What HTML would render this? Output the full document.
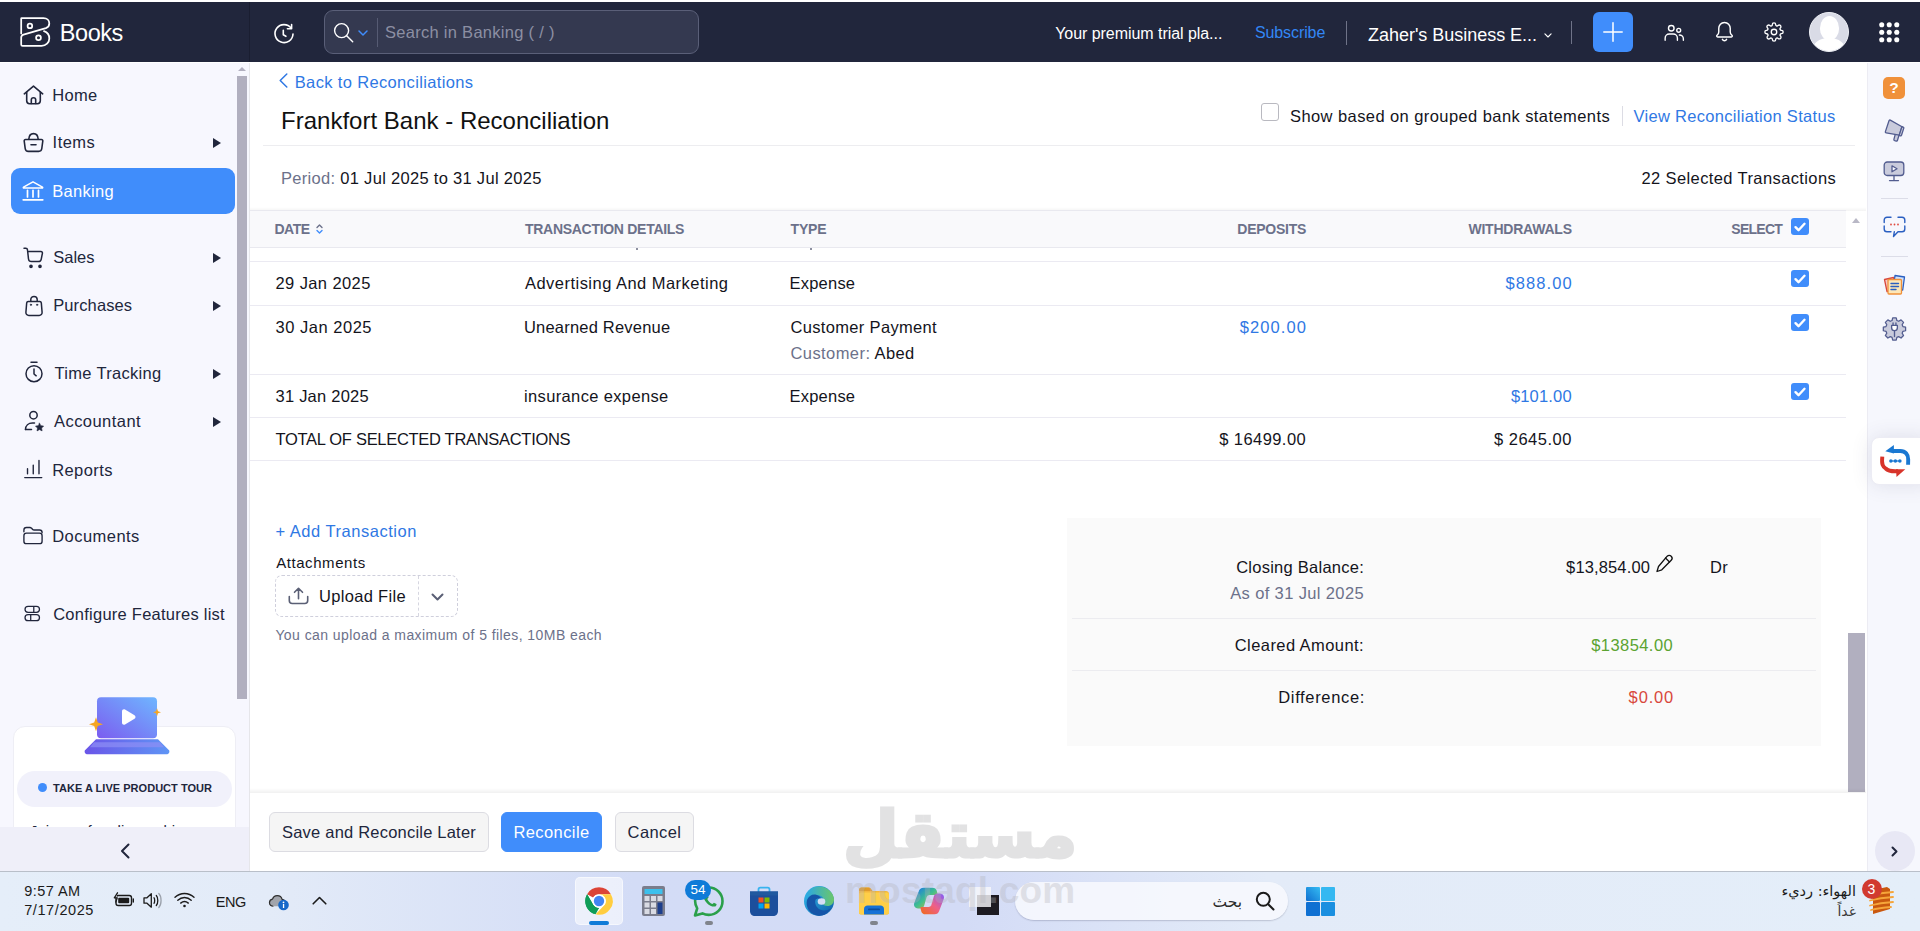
<!DOCTYPE html>
<html lang="en">
<head>
<meta charset="utf-8">
<title>Frankfort Bank - Reconciliation | Books</title>
<style>
*{box-sizing:border-box;margin:0;padding:0}
html,body{width:1920px;height:931px;overflow:hidden;background:#fff}
body{font-family:"Liberation Sans",sans-serif;color:#14141c;position:relative;font-size:16px}
.abs{position:absolute}
.t{position:absolute;white-space:nowrap;line-height:20px;height:20px}
svg{position:absolute;overflow:visible}
/* header */
#hdr{left:0;top:2px;width:1920px;height:60px;background:#21263c}
#hdr .logo-sep{left:249px;top:0;width:1px;height:60px;background:#1a1e31}
#search{left:324px;top:8px;width:375px;height:44px;border:1px solid #5a5f78;border-radius:9px;background:#343950}
#search .sep{left:52px;top:7px;width:1px;height:29px;background:#565b73}
/* left sidebar */
#side{left:0;top:63px;width:249px;height:808px;background:#f7f7fe}
#sideborder{left:249px;top:63px;width:1px;height:808px;background:#e6e6ea}
.nav{position:absolute;left:53px;font-size:16.5px;color:#21263c;white-space:nowrap;line-height:20px;letter-spacing:.35px}
.arrow{position:absolute;left:213px;width:0;height:0;border-left:8px solid #21263c;border-top:5px solid transparent;border-bottom:5px solid transparent}
#active{left:11px;top:168px;width:224px;height:46px;border-radius:9px;background:#408dfb}
/* main */
#main{left:250px;top:63px;width:1617px;height:808px;background:#fff}
/* right bar */
#rbar{left:1867px;top:63px;width:53px;height:808px;background:#f6f7fd;border-left:1px solid #ececf3}
/* taskbar */
#task{left:0;top:871px;width:1920px;height:60px;background:linear-gradient(90deg,#e5eef9 0%,#e3ebf8 14%,#d3dcf6 33%,#d3dbf6 50%,#e3ebf8 66%,#e4eef9 100%);border-top:1px solid #b9bfc9}

.lnk,.td.lnk{color:#2f78e4}
.th{position:absolute;white-space:nowrap;font-size:14px;font-weight:700;color:#6c718a;line-height:16px;top:221px;letter-spacing:0}
.td{position:absolute;white-space:nowrap;font-size:16.5px;color:#14141c;line-height:20px;letter-spacing:.3px}
.r{text-align:right}
.hl{position:absolute;left:250px;width:1596px;height:1px;background:#ebeaf2}
.cb{position:absolute;left:1791px;width:18px;height:17px;border-radius:3px;background:#408dfb}
.cb svg{left:3px;top:3.5px}
.btn{position:absolute;top:812px;height:40px;border:1px solid #dcdce2;border-radius:6px;background:#f5f5f5;font-size:16.5px;line-height:38px;text-align:center;white-space:nowrap;color:#21263c;letter-spacing:.3px}
</style>
</head>
<body>
<!-- ============ HEADER ============ -->
<div id="hdr" class="abs">
  <div class="abs logo-sep"></div>
  <!-- logo -->
  <svg style="left:20px;top:15px" width="30" height="30" viewBox="0 0 30 30" fill="none" stroke="#fff" stroke-width="1.750" stroke-linejoin="round" stroke-linecap="round">
    <path d="M1.200 16.400V1.600Q1.200 1.100 1.700 1.100H23.500C27 1.100 29.300 3.300 29.300 6.400C29.300 8.600 28 10.300 25.900 11.100L3.500 17.700C2 18.200 1.200 19.100 1.200 20.600V27.500Q1.200 28.900 2.600 28.900H21.500C26 28.900 29.300 25.600 29.300 21.400C29.300 18.100 27.300 15.300 24 14.200"/>
    <circle cx="9.900" cy="8.900" r="2.300"/>
    <circle cx="18.500" cy="20.800" r="2.400"/>
  </svg>
  <div class="t" id="books" style="left:59.80px;top:18.00px;font-size:23.5px;line-height:26px;height:26px;color:#fff;letter-spacing:-0.45px">Books</div>
  <!-- recent/refresh -->
  <svg style="left:273px;top:21px" width="22" height="22" viewBox="0 0 22 22" fill="none" stroke="#fff" stroke-width="1.600" stroke-linecap="round" stroke-linejoin="round">
    <path d="M18.200 5.200A9 9 0 1 0 20 11"/>
    <path d="M18.600 1.500v4.200h-4.200"/>
    <path d="M10.300 7.200v4.600l2.600 1.500"/>
  </svg>
  <div id="search" class="abs"><div class="abs sep"></div>
    <svg style="left:8px;top:11px" width="22" height="22" viewBox="0 0 22 22" fill="none" stroke="#fff" stroke-width="1.400" stroke-linecap="round"><circle cx="8.600" cy="8.600" r="7"/><path d="M13.700 13.700l6 6"/></svg>
    <svg style="left:33px;top:19px" width="10" height="6" viewBox="0 0 10 6" fill="none" stroke="#408dfb" stroke-width="1.500" stroke-linecap="round" stroke-linejoin="round"><path d="M1 1l4 4 4-4"/></svg>
    <div class="t" id="ph" style="left:60.00px;top:11.00px;font-size:16.5px;color:#8c8fa3;letter-spacing:0.28px">Search in Banking ( / )</div>
  </div>
  <div class="t" id="trial" style="left:1055.20px;top:22.00px;font-size:16px;color:#fff;letter-spacing:-0.05px">Your premium trial pla...</div>
  <div class="t" id="subs" style="left:1254.90px;top:21.00px;font-size:16px;color:#3386f5;letter-spacing:-0.09px">Subscribe</div>
  <div class="abs" style="left:1346px;top:19px;width:1px;height:24px;background:#6f7388"></div>
  <div class="t" id="org" style="left:1368.10px;top:23.00px;font-size:18px;color:#fff;letter-spacing:-0.03px">Zaher's Business E...</div>
  <svg style="left:1543.500px;top:30.500px" width="8" height="5.300" viewBox="0 0 9 6" fill="none" stroke="#fff" stroke-width="1.300" stroke-linecap="round" stroke-linejoin="round"><path d="M1 1l3.500 3.500L8 1"/></svg>
  <div class="abs" style="left:1571px;top:19px;width:1px;height:23px;background:#6f7388"></div>
  <!-- plus -->
  <div class="abs" style="left:1593px;top:10px;width:40px;height:40px;border-radius:6px;background:#408dfb"></div>
  <svg style="left:1603px;top:20px" width="20" height="20" viewBox="0 0 20 20" fill="none" stroke="#fff" stroke-width="1.500" stroke-linecap="round"><path d="M10 .800v18.400M.800 10h18.400"/></svg>
  <!-- users -->
  <svg style="left:1664px;top:21.500px" width="20.500" height="18.600" viewBox="0 0 22 20" fill="none" stroke="#fff" stroke-width="1.500" stroke-linecap="round" stroke-linejoin="round">
    <circle cx="7.800" cy="4.600" r="3"/><path d="M1.200 17.500v-2.300c0-2.500 2-4.400 4.500-4.400h4.200c2.500 0 4.500 1.900 4.500 4.400v2.300"/>
    <circle cx="15.800" cy="6.800" r="2.100"/><path d="M16.500 11.800c2.400 0 4.300 1.700 4.300 4v1.700"/>
  </svg>
  <!-- bell -->
  <svg style="left:1713.500px;top:19px" width="21" height="21" viewBox="0 0 22 22" fill="none" stroke="#fff" stroke-width="1.500" stroke-linecap="round" stroke-linejoin="round">
    <path d="M11 1.500c-3.600 0-6 2.800-6 6.200v3.800c0 1.400-.7 2.600-1.800 3.500-.7.600-.4 1.800.6 1.800h14.400c1 0 1.300-1.200.6-1.800-1.100-.9-1.800-2.100-1.800-3.500V7.700c0-3.400-2.400-6.200-6-6.200z"/>
    <path d="M8.800 19.200c.5 1 1.300 1.500 2.200 1.500s1.700-.5 2.200-1.500"/>
  </svg>
  <!-- gear -->
  <svg style="left:1764px;top:20px" width="20" height="20" viewBox="0 0 24 24" fill="none" stroke="#fff" stroke-width="1.600" stroke-linecap="round" stroke-linejoin="round">
    <circle cx="12" cy="12" r="3.300"/>
    <path d="M19.400 15a1.650 1.650 0 0 0 .33 1.820l.06.060a2 2 0 1 1-2.830 2.830l-.06-.06a1.650 1.650 0 0 0-1.820-.33 1.650 1.650 0 0 0-1 1.510V21a2 2 0 0 1-4 0v-.09A1.650 1.650 0 0 0 9 19.400a1.650 1.650 0 0 0-1.820.33l-.06.06a2 2 0 1 1-2.830-2.830l.06-.06a1.650 1.650 0 0 0 .33-1.820 1.650 1.650 0 0 0-1.510-1H3a2 2 0 0 1 0-4h.09A1.650 1.650 0 0 0 4.600 9a1.650 1.650 0 0 0-.33-1.820l-.06-.06a2 2 0 1 1 2.830-2.830l.06.06a1.650 1.650 0 0 0 1.820.33H9a1.650 1.650 0 0 0 1-1.510V3a2 2 0 0 1 4 0v.09a1.650 1.650 0 0 0 1 1.510 1.650 1.650 0 0 0 1.820-.33l.06-.06a2 2 0 1 1 2.830 2.830l-.06.06a1.650 1.650 0 0 0-.33 1.820V9a1.650 1.650 0 0 0 1.510 1H21a2 2 0 0 1 0 4h-.09a1.650 1.650 0 0 0-1.510 1z"/>
  </svg>
  <!-- avatar -->
  <div class="abs" style="left:1809px;top:10px;width:40px;height:40px;border-radius:50%;background:#d9dbe6;overflow:hidden;border:1px solid #eef0f6">
    <div class="abs" style="left:9.500px;top:3px;width:19px;height:24px;border-radius:50% 50% 46% 46%;background:#fff"></div>
    <div class="abs" style="left:2px;top:25px;width:34px;height:26px;border-radius:48% 48% 0 0;background:#fff"></div>
  </div>
  <!-- grid -->
  <svg style="left:1879px;top:19.500px" width="20.500" height="20.500" viewBox="0 0 21 21" fill="#fff"><circle cx="2.800" cy="2.800" r="2.600"/><circle cx="10.500" cy="2.800" r="2.600"/><circle cx="18.200" cy="2.800" r="2.600"/><circle cx="2.800" cy="10.500" r="2.600"/><circle cx="10.500" cy="10.500" r="2.600"/><circle cx="18.200" cy="10.500" r="2.600"/><circle cx="2.800" cy="18.200" r="2.600"/><circle cx="10.500" cy="18.200" r="2.600"/><circle cx="18.200" cy="18.200" r="2.600"/></svg>
</div>
<!-- ============ LEFT SIDEBAR ============ -->
<div id="side" class="abs">
  <!-- scrollbar -->
  <div class="abs" style="left:237px;top:13px;width:10px;height:623px;background:#b1afbf"></div>
  <div class="abs" style="left:238px;top:4px;width:0;height:0;border-left:4px solid transparent;border-right:4px solid transparent;border-bottom:4px solid #b1afbf"></div>
  <div id="active" class="abs" style="top:105px"></div>
  <!-- Home -->
  <svg style="left:23px;top:22px" width="21" height="20" viewBox="0 0 21 20" fill="none" stroke="#21263c" stroke-width="1.600" stroke-linecap="round" stroke-linejoin="round">
    <path d="M1.300 8.800L10.500 1.200l9.200 7.600"/><path d="M3.700 7.200v8.600c0 1.700 1.200 2.900 2.900 2.900h7.800c1.700 0 2.900-1.200 2.900-2.900V7.200"/><path d="M8.300 18.500v-3.700c0-1.200 1-2.100 2.200-2.100s2.200.9 2.200 2.100v3.700"/>
  </svg>
  <div class="nav" id="n1" style="top:22.00px;letter-spacing:0.36px;left:52.20px">Home</div>
  <!-- Items -->
  <svg style="left:23px;top:69px" width="21" height="21" viewBox="0 0 21 21" fill="none" stroke="#21263c" stroke-width="1.600" stroke-linecap="round" stroke-linejoin="round">
    <path d="M2.500 7.500h16c.8 0 1.400.7 1.300 1.500l-1 7.500c-.2 1.700-1.500 2.900-3.200 2.900H5.400c-1.700 0-3-1.200-3.200-2.900l-1-7.500c-.1-.8.500-1.500 1.300-1.500z"/><path d="M5.800 7.300C6 4 7.900 1.600 10.500 1.600S15 4 15.200 7.300"/><path d="M8 12.800h5"/>
  </svg>
  <div class="nav" id="n2" style="top:69.00px;letter-spacing:0.45px;left:52.60px">Items</div><div class="arrow" style="top:75px"></div>
  <!-- Banking -->
  <svg style="left:22px;top:117px" width="22" height="21" viewBox="0 0 22 21" fill="none" stroke="#fff" stroke-width="1.500" stroke-linecap="round" stroke-linejoin="round">
    <path d="M1.500 7.200L11 1.800l9.500 5.400c.4.300.2.900-.3.900H1.800c-.5 0-.7-.6-.3-.9z"/><path d="M5.500 10.300v6.700M11 10.300v6.700M16.500 10.300v6.700M1.200 19.800h19.600" stroke-width="1.700"/>
  </svg>
  <div class="nav" id="n3" style="top:118.00px;color:#fff;letter-spacing:0.31px;left:52.20px">Banking</div>
  <!-- Sales -->
  <svg style="left:23px;top:184px" width="22" height="22" viewBox="0 0 22 22" fill="none" stroke="#21263c" stroke-width="1.500" stroke-linecap="round" stroke-linejoin="round">
    <path d="M1 1.300h1.800c.9 0 1.600.6 1.700 1.500l1 9.200c.2 1.500 1.400 2.600 2.900 2.600h6.900c1.400 0 2.600-1 2.900-2.300l1.200-6c.2-.9-.5-1.800-1.500-1.800H6"/><circle cx="8" cy="19.300" r="1.100" fill="#21263c"/><circle cx="17" cy="19.300" r="1.100" fill="#21263c"/>
  </svg>
  <div class="nav" id="n4" style="top:184.00px;letter-spacing:0.02px;left:53.20px">Sales</div><div class="arrow" style="top:190px"></div>
  <!-- Purchases -->
  <svg style="left:25px;top:232px" width="18" height="22" viewBox="0 0 18 22" fill="none" stroke="#21263c" stroke-width="1.500" stroke-linecap="round" stroke-linejoin="round">
    <path d="M3.200 6.500h11.600c.8 0 1.400.6 1.500 1.300l.8 9.600c.1 1.700-1.200 3.100-2.900 3.100H3.800c-1.700 0-3-1.400-2.900-3.100l.8-9.600c.1-.7.700-1.300 1.500-1.300z"/><path d="M5.800 6.300V4.600c0-1.800 1.400-3.200 3.200-3.200s3.200 1.400 3.200 3.200v1.700"/><circle cx="5.900" cy="9.800" r=".7" fill="#21263c" stroke-width=".6"/><circle cx="12.100" cy="9.800" r=".7" fill="#21263c" stroke-width=".6"/>
  </svg>
  <div class="nav" id="n5" style="top:232.00px;letter-spacing:0.12px;left:53.20px">Purchases</div><div class="arrow" style="top:238px"></div>
  <!-- Time tracking -->
  <svg style="left:24px;top:298px" width="20" height="22" viewBox="0 0 20 22" fill="none" stroke="#21263c" stroke-width="1.500" stroke-linecap="round" stroke-linejoin="round">
    <circle cx="10" cy="12.700" r="8"/><path d="M10 8v5l2.200 1.800M7 1.200h6"/>
  </svg>
  <div class="nav" id="n6" style="top:300.00px;letter-spacing:0.29px;left:54.60px">Time Tracking</div><div class="arrow" style="top:306px"></div>
  <!-- Accountant -->
  <svg style="left:24px;top:347px" width="22" height="22" viewBox="0 0 22 22" fill="none" stroke="#21263c" stroke-width="1.500" stroke-linecap="round" stroke-linejoin="round">
    <circle cx="9.500" cy="5.200" r="3.700"/><path d="M1.500 19.500c0-4 3-6.500 7-6.500h2"/><path d="M1.500 19.500h6"/>
    <path fill="#21263c" stroke-width=".6" d="M15.500 13.200l1.300 2.500 2.800.4-2 2 .5 2.800-2.600-1.300-2.500 1.300.5-2.800-2-2 2.800-.4z"/>
  </svg>
  <div class="nav" id="n7" style="top:348.00px;letter-spacing:0.45px;left:54.00px">Accountant</div><div class="arrow" style="top:354px"></div>
  <!-- Reports -->
  <svg style="left:24px;top:395px" width="18.500" height="22" viewBox="0 0 20 22" fill="none" stroke="#21263c" stroke-width="1.500" stroke-linecap="round">
    <path d="M3.800 10.800v5.400M10 6.800v9.400M16.200 1.800v14.400M.800 20.300h18.400"/>
  </svg>
  <div class="nav" id="n8" style="top:397.00px;letter-spacing:0.41px;left:52.20px">Reports</div>
  <!-- Documents -->
  <svg style="left:23px;top:462.500px" width="20" height="19" viewBox="0 0 22 20" fill="none" stroke="#21263c" stroke-width="1.500" stroke-linecap="round" stroke-linejoin="round">
    <path d="M1 6V4c0-1.600 1.200-2.800 2.800-2.800h3.700c.8 0 1.500.3 2 .9l.9 1c.5.600 1.200.9 2 .9h5.800c1.600 0 2.800 1.200 2.800 2.800V7"/><rect x="1" y="7.400" width="20" height="11.600" rx="2.800"/>
  </svg>
  <div class="nav" id="n9" style="top:463.00px;letter-spacing:0.46px;left:52.20px">Documents</div>
  <!-- Configure -->
  <svg style="left:24px;top:542px" width="16.500" height="17" viewBox="0 0 19 20" fill="none" stroke="#21263c" stroke-width="1.500" stroke-linecap="round" stroke-linejoin="round">
    <rect x="1" y="1.500" width="17" height="7.200" rx="3.600"/><rect x="1" y="11.300" width="17" height="7.200" rx="3.600"/><path d="M11.300 1.800v6.600M7.700 11.600v6.600"/>
  </svg>
  <div class="nav" id="n10" style="top:541.00px;letter-spacing:0.25px;left:53.20px">Configure Features list</div>
  <!-- product tour card -->
  <div class="abs" style="left:13px;top:663px;width:223px;height:120px;border-radius:12px;background:#fff;border:1px solid #eeeef5"></div>
  <div class="abs" style="left:17px;top:708px;width:215px;height:36px;border-radius:18px;background:#f1f1fb"></div>
  <div class="abs" style="left:38px;top:720px;width:9px;height:9px;border-radius:50%;background:#408dfb"></div>
  <div class="t" id="tour" style="left:53.00px;top:715px;font-size:11px;font-weight:700;color:#21263c;letter-spacing:0.03px">TAKE A LIVE PRODUCT TOUR</div>
  <!-- laptop illustration -->
  <svg style="left:83px;top:632.500px" width="88" height="60.500" viewBox="0 0 88 60">
    <defs><linearGradient id="lg1" x1="0" y1="1" x2="1" y2="0"><stop offset="0" stop-color="#7b5cf0"/><stop offset="1" stop-color="#6fb6ff"/></linearGradient>
    <linearGradient id="lg2" x1="0" y1="0" x2="1" y2="0"><stop offset="0" stop-color="#6a55e8"/><stop offset="1" stop-color="#5f95f5"/></linearGradient></defs>
    <rect x="14" y="1" width="60" height="41" rx="4" fill="url(#lg1)"/>
    <path d="M13 43h62l11 11c1 1.500 0 4-2.500 4H4.500C2 58 1 55.500 2 54z" fill="url(#lg2)"/>
    <path d="M11 46h66l4 5H7z" fill="#8f8ff5" opacity=".7"/>
        <path d="M39 15c0-1.600 1.600-2.500 3-1.700l9.500 5.800c1.300.8 1.300 2.600 0 3.400L42 28.300c-1.400.8-3-.1-3-1.700z" fill="#fff"/>
    <path d="M13 21l1.800 5.200L20 28l-5.200 1.800L13 35l-1.800-5.200L6 28l5.200-1.800z" fill="#f5a623"/>
    <path d="M74 12l1 3 3 1-3 1-1 3-1-3-3-1 3-1z" fill="#f5a623"/>
  </svg>
  <!-- cut-off text under pill -->
  <div class="abs" style="left:30px;top:761px;width:190px;height:3px;overflow:hidden;font-size:15px;line-height:14px;color:#21263c;white-space:nowrap">Join our free live webinar</div>
  <!-- collapse bar -->
  <div class="abs" style="left:0;top:764px;width:249px;height:44px;background:#efeff9"></div>
  <svg style="left:120px;top:780px" width="10" height="16" viewBox="0 0 10 16" fill="none" stroke="#21263c" stroke-width="2" stroke-linecap="round" stroke-linejoin="round"><path d="M8.500 1.500L2 8l6.500 6.500"/></svg>
</div>
<div id="sideborder" class="abs"></div>
<!-- ============ MAIN ============ -->
<div id="main" class="abs"></div>
<!-- back link -->
<svg style="left:279px;top:73px" width="9" height="15" viewBox="0 0 9 15" fill="none" stroke="#2f78e4" stroke-width="1.500" stroke-linecap="round" stroke-linejoin="round"><path d="M7.800 1L1.200 7.500 7.800 14"/></svg>
<div class="t lnk" id="back" style="left:294.75px;top:72px;font-size:16.5px;letter-spacing:0.35px">Back to Reconciliations</div>
<div class="t" id="title" style="left:281.00px;top:106px;font-size:24px;line-height:30px;height:30px;color:#111;letter-spacing:0.01px">Frankfort Bank - Reconciliation</div>
<div class="abs" style="left:1261px;top:103px;width:18px;height:18px;border:1px solid #b9b9c0;border-radius:3px;background:#fff"></div>
<div class="t" id="showb" style="left:1290.00px;top:106px;font-size:16.5px;letter-spacing:0.42px">Show based on grouped bank statements</div>
<div class="abs" style="left:1622px;top:106px;width:1px;height:20px;background:#dcdce4"></div>
<div class="t lnk" id="viewr" style="left:1633.50px;top:106px;font-size:16.5px;letter-spacing:0.30px">View Reconciliation Status</div>
<div class="abs" style="left:263px;top:145px;width:1592px;height:1px;background:#ededf0"></div>
<div class="t" id="period" style="left:281.00px;top:168px;font-size:16.5px;letter-spacing:0.30px"><span style="color:#6c718a">Period:</span> 01 Jul 2025 to 31 Jul 2025</div>
<div class="t" id="sel22" style="left:1641.50px;top:168px;font-size:16.5px;letter-spacing:0.39px">22 Selected Transactions</div>
<!-- table header -->
<div class="abs" style="left:250px;top:207px;width:1616px;height:4px;background:linear-gradient(180deg,rgba(0,0,0,0),rgba(0,0,0,.045))"></div>
<div class="abs" style="left:250px;top:210px;width:1596px;height:38px;background:#f9f9fb;border-top:1px solid #e9e9ef;border-bottom:1px solid #e9e9ef"></div>
<div class="th" id="h1" style="left:274.50px;letter-spacing:-0.50px">DATE</div>
<svg style="left:316px;top:224px" width="7" height="10" viewBox="0 0 7 10" fill="none" stroke-width="1.400" stroke-linecap="round" stroke-linejoin="round"><path d="M1 3.500L3.500 1 6 3.500" stroke="#6c718a"/><path d="M1 6.500L3.500 9 6 6.500" stroke="#408dfb"/></svg>
<div class="th" id="h2" style="left:525.00px;letter-spacing:-0.29px">TRANSACTION DETAILS</div>
<div class="th" id="h3" style="left:790.50px;letter-spacing:-0.17px">TYPE</div>
<div class="th r" id="h4" style="right:613.90px;letter-spacing:-0.25px">DEPOSITS</div>
<div class="th r" id="h5" style="right:348.20px;letter-spacing:-0.22px">WITHDRAWALS</div>
<div class="th r" id="h6" style="right:137.80px;letter-spacing:-0.72px">SELECT</div>
<div class="cb" style="top:218px"><svg width="12" height="10" viewBox="0 0 12 10" fill="none" stroke="#fff" stroke-width="2.400" stroke-linecap="round" stroke-linejoin="round"><path d="M1.500 5.200l3 3 6-6.400"/></svg></div>
<div class="abs" style="left:1852px;top:218px;width:0;height:0;border-left:4px solid transparent;border-right:4px solid transparent;border-bottom:5px solid #b9b8c6"></div>
<!-- cut-off remnants of previous row -->
<div class="abs" style="left:636px;top:248px;width:2px;height:2px;background:#8d90a0"></div>
<div class="abs" style="left:810px;top:248px;width:2px;height:2px;background:#8d90a0"></div>
<div class="hl" style="top:261px"></div>
<!-- row 1 -->
<div class="td" id="r1a" style="left:275.50px;top:273px;letter-spacing:0.40px">29 Jan 2025</div>
<div class="td" id="r1b" style="left:525.00px;top:273px;letter-spacing:0.47px">Advertising And Marketing</div>
<div class="td" id="r1c" style="left:789.50px;top:273px;letter-spacing:0.22px">Expense</div>
<div class="td r lnk" id="r1d" style="right:347.20px;top:273px;letter-spacing:1.10px">$888.00</div>
<div class="cb" style="top:270px"><svg width="12" height="10" viewBox="0 0 12 10" fill="none" stroke="#fff" stroke-width="2.400" stroke-linecap="round" stroke-linejoin="round"><path d="M1.500 5.200l3 3 6-6.400"/></svg></div>
<div class="hl" style="top:305px"></div>
<!-- row 2 -->
<div class="td" id="r2a" style="left:275.50px;top:317px;letter-spacing:0.52px">30 Jan 2025</div>
<div class="td" id="r2b" style="left:524.00px;top:317px;letter-spacing:0.20px">Unearned Revenue</div>
<div class="td" id="r2c" style="left:790.50px;top:317px;letter-spacing:0.33px">Customer Payment</div>
<div class="td" id="r2e" style="left:790.50px;top:343px;letter-spacing:0.42px"><span style="color:#6c718a">Customer:</span> Abed</div>
<div class="td r lnk" id="r2d" style="right:612.90px;top:317px;letter-spacing:1.12px">$200.00</div>
<div class="cb" style="top:314px"><svg width="12" height="10" viewBox="0 0 12 10" fill="none" stroke="#fff" stroke-width="2.400" stroke-linecap="round" stroke-linejoin="round"><path d="M1.500 5.200l3 3 6-6.400"/></svg></div>
<div class="hl" style="top:374px"></div>
<!-- row 3 -->
<div class="td" id="r3a" style="left:275.50px;top:386px;letter-spacing:0.23px">31 Jan 2025</div>
<div class="td" id="r3b" style="left:524.00px;top:386px;letter-spacing:0.36px">insurance expense</div>
<div class="td" id="r3c" style="left:789.50px;top:386px;letter-spacing:0.22px">Expense</div>
<div class="td r lnk" id="r3d" style="right:348.20px;top:386px;letter-spacing:0.18px">$101.00</div>
<div class="cb" style="top:383px"><svg width="12" height="10" viewBox="0 0 12 10" fill="none" stroke="#fff" stroke-width="2.400" stroke-linecap="round" stroke-linejoin="round"><path d="M1.500 5.200l3 3 6-6.400"/></svg></div>
<div class="hl" style="top:417px"></div>
<!-- totals -->
<div class="td" id="tot" style="left:275.50px;top:429px;letter-spacing:-0.30px">TOTAL OF SELECTED TRANSACTIONS</div>
<div class="td r" id="totd" style="right:613.90px;top:429px;letter-spacing:0.43px">$ 16499.00</div>
<div class="td r" id="totw" style="right:348.20px;top:429px;letter-spacing:0.49px">$ 2645.00</div>
<div class="hl" style="top:460px"></div>
<!-- add transaction / attachments -->
<div class="t lnk" id="addt" style="left:275.40px;top:521px;font-size:16.5px;letter-spacing:0.53px">+ Add Transaction</div>
<div class="t" id="att" style="left:276.20px;top:553px;font-size:15px;letter-spacing:0.56px">Attachments</div>
<div class="abs" style="left:275px;top:575px;width:183px;height:42px;border:1px dashed #cfcfdc;border-radius:7px;background:#fff"></div>
<div class="abs" style="left:418px;top:576px;width:0;height:40px;border-left:1px dashed #d6d6e0"></div>
<svg style="left:288px;top:587px" width="21" height="18" viewBox="0 0 21 18" fill="none" stroke="#5a5f75" stroke-width="1.600" stroke-linecap="round" stroke-linejoin="round"><path d="M1.300 9.500v4c0 1.700 1.200 3 3 3h12.400c1.800 0 3-1.300 3-3v-4"/><path d="M10.500 11.800V1.500M6.500 5.300l4-4 4 4"/></svg>
<div class="t" id="upl" style="left:319.00px;top:586px;font-size:16.5px;letter-spacing:0.32px">Upload File</div>
<svg style="left:431px;top:593px" width="13" height="9" viewBox="0 0 13 9" fill="none" stroke="#5a5f75" stroke-width="2" stroke-linecap="round" stroke-linejoin="round"><path d="M1.500 1.500l5 5 5-5"/></svg>
<div class="t" id="maxf" style="left:275.40px;top:625.00px;font-size:14px;color:#6c718a;letter-spacing:0.43px">You can upload a maximum of 5 files, 10MB each</div>
<!-- summary box -->
<div class="abs" style="left:1067px;top:518px;width:754px;height:228px;background:#fafafa"></div>
<div class="t r" id="s1" style="right:556.00px;top:557px;font-size:16.5px;letter-spacing:0.25px">Closing Balance:</div>
<div class="t r" id="s2" style="right:556.00px;top:583px;font-size:16.5px;color:#6c718a;letter-spacing:0.37px">As of 31 Jul 2025</div>
<div class="t r" id="s3" style="right:270.00px;top:557px;font-size:16.5px;letter-spacing:0.13px">$13,854.00</div>
<svg style="left:1656px;top:554px" width="18" height="19" viewBox="0 0 18 19" fill="none" stroke="#111" stroke-width="1.300" stroke-linecap="round" stroke-linejoin="round"><path d="M11.200 2.200c1.100-1.100 2.900-1.100 4 0s1.100 2.900 0 4L5.800 15.800 1 17.500l1.500-5z"/><path d="M9.500 4l4 4"/></svg>
<div class="t" id="s4" style="left:1710.10px;top:557px;font-size:16.5px;letter-spacing:0.20px">Dr</div>
<div class="abs" style="left:1072px;top:618px;width:744px;height:1px;background:#ececf0"></div>
<div class="t r" id="s5" style="right:556.00px;top:635px;font-size:16.5px;letter-spacing:0.42px">Cleared Amount:</div>
<div class="t r" id="s6" style="right:246.90px;top:635px;font-size:16.5px;color:#5ba331;letter-spacing:0.43px">$13854.00</div>
<div class="abs" style="left:1072px;top:670px;width:744px;height:1px;background:#ececf0"></div>
<div class="t r" id="s7" style="right:555.00px;top:687px;font-size:16.5px;letter-spacing:0.66px">Difference:</div>
<div class="t r" id="s8" style="right:245.90px;top:687px;font-size:16.5px;color:#d8483c;letter-spacing:0.84px">$0.00</div>
<!-- main scrollbar -->
<div class="abs" style="left:1848px;top:633px;width:17px;height:159px;background:#b1afbf"></div>
<!-- footer -->
<div class="abs" style="left:250px;top:788px;width:1616px;height:5px;background:linear-gradient(180deg,rgba(0,0,0,0),rgba(0,0,0,.06))"></div>
<div class="abs" style="left:250px;top:793px;width:1617px;height:78px;background:#fff"></div>
<div class="btn" id="b1" style="left:269px;width:220px;letter-spacing:0.21px">Save and Reconcile Later</div>
<div class="btn" id="b2" style="left:501px;width:101px;background:#408dfb;border-color:#408dfb;color:#fff;letter-spacing:0.41px">Reconcile</div>
<div class="btn" id="b3" style="left:615px;width:79px;letter-spacing:0.40px">Cancel</div>
<!-- ============ RIGHT BAR ============ -->
<div id="rbar" class="abs"></div>
<!-- help -->
<div class="abs" style="left:1883px;top:77px;width:22px;height:22px;border-radius:5px;background:#f0913a"></div>
<div class="t" style="left:1883px;top:78px;width:22px;text-align:center;font-size:15.500px;font-weight:700;color:#fff;line-height:20px">?</div>
<!-- megaphone -->
<svg style="left:1883px;top:119px" width="22" height="23" viewBox="0 0 22 23" fill="#c9cbdc" stroke="#525c8f" stroke-width="1.300" stroke-linejoin="round" stroke-linecap="round">
  <path d="M12.300 15.200L10.900 20.300c-.2.700.2 1.100.8 1.300l1.500.4c.6.200 1.100-.1 1.300-.8L16 16.300"/>
  <path d="M7.300 1.100c-.6-.3-1.100 0-1.300.6L2.400 12.600c-.2.700.1 1.100.8 1.200L16.300 16.200 19 7.800z"/>
  <path d="M19 7.500l1.300.6c.5.200.6.600.5 1l-2.300 7.200c-.2.500-.5.700-1 .5l-1.300-.5z"/>
</svg>
<!-- monitor play -->
<svg style="left:1883px;top:161px" width="22" height="21" viewBox="0 0 22 21" fill="#c9cbdc" stroke="#525c8f" stroke-width="1.300" stroke-linejoin="round" stroke-linecap="round">
  <rect x="1.200" y="1" width="19.600" height="13.500" rx="3"/><path fill="none" d="M11 14.800v4.400M6.500 19.600h9"/><path fill="#f6f7fd" d="M9 4.800l5 3-5 3z"/>
</svg>
<div class="abs" style="left:1881px;top:198px;width:27px;height:1px;background:#dcdde8"></div>
<!-- chat -->
<svg style="left:1883px;top:216px" width="23" height="22" viewBox="0 0 23 22" fill="none" stroke="#2a5fc1" stroke-width="1.400" stroke-linecap="round" stroke-linejoin="round">
  <path d="M8 1.200H4c-1.600 0-2.800 1.200-2.800 2.800v2.500M15 1.200h4c1.600 0 2.800 1.200 2.800 2.800v2.500M1.200 10v3c0 1.600 1.200 2.800 2.800 2.800h4M21.800 10v3c0 1.600-1.200 2.800-2.800 2.800h-4l-4.500 4.800.8-4.800"/>
  <circle cx="8" cy="8.500" r=".9" fill="#e04a3f" stroke="none"/><circle cx="11.500" cy="8.500" r=".9" fill="#e04a3f" stroke="none"/><circle cx="15" cy="8.500" r=".9" fill="#e04a3f" stroke="none"/>
</svg>
<div class="abs" style="left:1881px;top:256px;width:27px;height:1px;background:#dcdde8"></div>
<!-- notes -->
<svg style="left:1883px;top:274px" width="23" height="22" viewBox="0 0 23 22" stroke-linejoin="round" stroke-linecap="round">
  <path d="M1.500 5.500l9-2 2.500 12-9 2z" fill="#f7c9c4" stroke="#d8483c" stroke-width="1.300"/>
  <path d="M12 1.500l9.500 1.500-1.800 13-9.500-1.500z" fill="#cfe0fb" stroke="#2a5fc1" stroke-width="1.300"/>
  <rect x="5" y="5.500" width="13.500" height="14.500" rx="1" fill="#fde7b8" stroke="#f0913a" stroke-width="1.300"/>
  <path d="M8 9.500h7.500M8 12.500h7.500M8 15.500h5" stroke="#2a5fc1" stroke-width="1.400" fill="none"/>
</svg>
<!-- gear plug -->
<svg style="left:1883px;top:316px" width="23" height="23" viewBox="0 0 24 24" fill="#c9cbdc" stroke="#525c8f" stroke-width="1.400" stroke-linejoin="round" stroke-linecap="round">
  <path d="M10 1.500h4l.7 3 2 .9 2.700-1.600 2.800 2.800-1.600 2.700.9 2 3 .7v0 0l0 0v4l-3 .7-.9 2 1.600 2.700-2.800 2.800-2.700-1.600-2 .9-.7 3h-4l-.7-3-2-.9-2.700 1.600-2.800-2.800 1.600-2.700-.9-2-3-.7v-4l3-.7.9-2L1.800 6.600l2.800-2.800 2.700 1.600 2-.9z" transform="translate(.8 .5) scale(.93)"/>
  <path d="M9 9.800h6v2.500c0 1.700-1.300 3-3 3s-3-1.300-3-3z" fill="#fff" stroke="#525c8f"/><path d="M10.500 9.500V7.200M13.500 9.500V7.200M12 15.500v6" fill="none"/>
</svg>
<!-- floating chat button -->
<div class="abs" style="left:1871px;top:437px;width:60px;height:48px;border-radius:8px;background:#fff;box-shadow:0 0 20px rgba(60,60,100,.13);border:1px solid #ececf4"></div>
<svg style="left:1877.800px;top:444px" width="34" height="34" viewBox="0 0 34 34" fill="none" stroke-linecap="butt">
  <path d="M14.500 7H22.300C27.500 7 30.200 10.300 30.200 15.500L30.100 20.800" stroke="#1a78d2" stroke-width="3.900"/>
  <path d="M7.300 7.300L15.900.9V9.600z" fill="#1a78d2"/>
  <path d="M4.300 12.600C3.400 20.600 5 22.500 7.700 24.500C10.300 27.100 13.700 27.300 17.200 27.300H20" stroke="#d8342a" stroke-width="3.900"/>
  <path d="M18 25.300H27.300L18.500 33.100z" fill="#d8342a"/>
  <circle cx="12.900" cy="17" r="1.750" fill="#1a78d2"/><circle cx="17.400" cy="17" r="1.750" fill="#1a78d2"/><circle cx="21.900" cy="17" r="1.750" fill="#1a78d2"/><rect x="12.900" y="16.400" width="9" height="1.200" fill="#1a78d2"/>
</svg>
<!-- expand circle -->
<div class="abs" style="left:1875px;top:831px;width:40px;height:40px;border-radius:50%;background:#e8e8f5"></div>
<svg style="left:1891px;top:846px" width="7" height="11" viewBox="0 0 7 11" fill="none" stroke="#21263c" stroke-width="2" stroke-linecap="round" stroke-linejoin="round"><path d="M1.500 1.500l4 4-4 4"/></svg>
<!-- ============ TASKBAR ============ -->
<div id="task" class="abs"></div>
<!-- clock -->
<div class="t" id="clk1" style="left:24.20px;top:881px;font-size:14.500px;color:#1b1b1b;letter-spacing:0.46px">9:57 AM</div>
<div class="t" id="clk2" style="left:24.20px;top:900px;font-size:14.500px;color:#1b1b1b;letter-spacing:0.59px">7/17/2025</div>
<!-- battery -->
<svg style="left:113px;top:892px" width="22" height="16" viewBox="0 0 22 16" fill="none" stroke="#1b1b1b" stroke-width="1.400" stroke-linejoin="round" stroke-linecap="round">
  <rect x="3" y="3.500" width="15.500" height="10" rx="2.200"/><rect x="5.200" y="5.700" width="11" height="5.600" rx="1" fill="#1b1b1b" stroke="none"/><path d="M20.300 7v3"/><path d="M4.500 0.800L1.300 5.800h3L2.800 10" stroke-width="1.300" fill="#e6eef9"/>
</svg>
<!-- volume -->
<svg style="left:143px;top:892px" width="21" height="17" viewBox="0 0 21 17" fill="none" stroke="#1b1b1b" stroke-width="1.300" stroke-linejoin="round" stroke-linecap="round">
  <path d="M1 5.800h3l4.300-4v13.400l-4.300-4H1z"/><path d="M11 5.800c.9.700.9 4.700 0 5.400M13.300 3.500c2 2 2 8 0 10"/><path d="M15.800 1.500c3 3 3 11 0 14" stroke="#9aa0aa"/>
</svg>
<!-- wifi -->
<svg style="left:174px;top:892px" width="21" height="16" viewBox="0 0 21 16" fill="none" stroke="#1b1b1b" stroke-width="1.400" stroke-linecap="round">
  <path d="M1 5.200c5.500-5 13.500-5 19 0M3.800 8.200c3.900-3.600 9.500-3.600 13.400 0M6.700 11.100c2.300-2 5.300-2 7.600 0"/><circle cx="10.500" cy="14" r="1.300" fill="#1b1b1b" stroke="none"/>
</svg>
<div class="t" id="eng" style="left:215.80px;top:892px;font-size:14.500px;color:#1b1b1b;letter-spacing:-0.45px">ENG</div>
<!-- cloud -->
<svg style="left:268px;top:891px" width="22" height="20" viewBox="0 0 22 20">
  <g transform="translate(.5 3.300) scale(.82)"><path d="M6 14.500c-2.800 0-4.800-1.800-4.800-4.300 0-2.200 1.600-3.900 3.700-4.200C5.700 3.200 8 1.500 10.700 1.500c2.900 0 5.300 1.900 5.900 4.600 2.200.2 3.900 1.900 3.900 4.100" fill="#a2a5ac" stroke="#2e2e2e" stroke-width="1.500" stroke-linejoin="round"/><path d="M6 14.500h8l3-6-6-5-6 3z" fill="#a2a5ac"/></g>
  <circle cx="15.500" cy="14" r="5.300" fill="#1668c9"/><rect x="14.900" y="13" width="1.300" height="4" fill="#fff"/><circle cx="15.500" cy="11.300" r=".9" fill="#fff"/>
</svg>
<svg style="left:312px;top:896px" width="15" height="9" viewBox="0 0 15 9" fill="none" stroke="#1b1b1b" stroke-width="1.600" stroke-linecap="round" stroke-linejoin="round"><path d="M1.200 7.800l6.300-6.300 6.300 6.300"/></svg>
<!-- chrome -->
<div class="abs" style="left:575px;top:877px;width:48px;height:48px;border-radius:5px;background:rgba(255,255,255,.55);border:1px solid rgba(255,255,255,.5)"></div>
<svg style="left:584px;top:886px" width="30" height="30" viewBox="0 0 48 48">
  <circle cx="24" cy="24" r="22" fill="#fff"/>
  <path d="M24 2a22 22 0 0 1 19.050 11H24a11 11 0 0 0-9.530 5.500L4.950 13A22 22 0 0 1 24 2z" fill="#db4437"/>
  <path d="M4.950 13l9.520 16.500A11 11 0 0 0 24 35l-5.400 10.330A22 22 0 0 1 4.950 13z" fill="#0f9d58"/>
  <path d="M43.050 13A22 22 0 0 1 18.600 45.330L33.530 29.500A11 11 0 0 0 24 13z" fill="#ffcd40"/>
  <path d="M4.950 13A22 22 0 0 0 2 24c0 9.500 6 17.500 14.300 20.600L24 35a11 11 0 0 1-9.530-5.500z" fill="#0f9d58"/>
  <circle cx="24" cy="24" r="10.500" fill="#fff"/><circle cx="24" cy="24" r="8.300" fill="#4285f4"/>
</svg>
<div class="abs" style="left:589px;top:921px;width:20px;height:4px;border-radius:2px;background:#0f7bd8"></div>
<!-- calculator -->
<svg style="left:642px;top:886px" width="23" height="30" viewBox="0 0 23 30">
  <rect x="0" y="0" width="23" height="30" rx="2" fill="#7a7d8c"/><rect x="2.500" y="3" width="18" height="5" fill="#3cc0ec"/>
  <g fill="#d9dbe3"><rect x="2.500" y="10" width="5" height="5"/><rect x="9" y="10" width="5" height="5"/><rect x="15.500" y="10" width="5" height="5"/><rect x="2.500" y="16.500" width="5" height="5"/><rect x="9" y="16.500" width="5" height="5"/><rect x="2.500" y="23" width="5" height="5"/><rect x="9" y="23" width="5" height="5"/></g>
  <rect x="15.500" y="16.500" width="5" height="11.500" fill="#1d3f8c"/>
</svg>
<!-- whatsapp -->
<svg style="left:692px;top:885px" width="33" height="33" viewBox="0 0 33 33" fill="none">
  <path d="M16.800 2.500c-7.600 0-13.700 6.100-13.700 13.600 0 2.700.8 5.200 2.100 7.300L3 30.500l7.400-2.100c1.900 1 4.100 1.500 6.400 1.500 7.600 0 13.700-6.100 13.700-13.700S24.400 2.500 16.800 2.500z" stroke="#2aa04a" stroke-width="2.600" stroke-linejoin="round"/>
  <path d="M11.500 9.500c-.7 2.500.8 6 3.500 8.700 2.600 2.600 5.800 3.800 8.300 3.200.9-.3 1.500-1.600 1.200-2.300l-2.600-1.300c-.6.300-1 1-1.600 1.200-2-.7-4.300-3-5-5 .3-.6 1-1 1.300-1.600l-1.300-2.800c-.9-.4-3.400-1-3.800-.1z" fill="#2aa04a"/>
</svg>
<div class="abs" style="left:685px;top:880px;width:26px;height:20px;border-radius:10px;background:#0f7bd8"></div>
<div class="t" id="b54" style="left:685px;top:880px;width:26px;text-align:center;font-size:13.500px;color:#fff;line-height:20px">54</div>
<div class="abs" style="left:705px;top:921px;width:8px;height:4px;border-radius:2px;background:#80848c"></div>
<!-- store -->
<svg style="left:749px;top:886px" width="30" height="31" viewBox="0 0 30 31">
  <path d="M9.500 6V3.500c0-1 .8-1.800 1.800-1.800h7.400c1 0 1.800.8 1.800 1.800V6" fill="none" stroke="#38b3ee" stroke-width="1.800"/>
  <path d="M1 5.500h28v19.500c0 3-2 5-5 5H6c-3 0-5-2-5-5z" fill="#1c4f9c"/><path d="M1 5.500h28v4H1z" fill="#20599f"/>
  <rect x="9.500" y="11.500" width="5" height="5" fill="#f25022"/><rect x="15.500" y="11.500" width="5" height="5" fill="#7fba00"/><rect x="9.500" y="17.500" width="5" height="5" fill="#00a4ef"/><rect x="15.500" y="17.500" width="5" height="5" fill="#ffb900"/>
</svg>
<!-- edge -->
<svg style="left:804px;top:886px" width="30" height="30" viewBox="0 0 30 30">
  <defs><linearGradient id="eg1" x1="0" y1="0" x2="1" y2="1"><stop offset="0" stop-color="#35c1f1"/><stop offset="1" stop-color="#0c59a4"/></linearGradient>
  <linearGradient id="eg2" x1="0" y1="0" x2="1" y2="0"><stop offset="0" stop-color="#2ba7e4"/><stop offset="1" stop-color="#6bc76a"/></linearGradient></defs>
  <circle cx="15" cy="15" r="15" fill="url(#eg1)"/>
  <path d="M2 9C5 2 12-1 19 1c6 1.500 11 7 11 12.500 0 4-3 6.500-6.500 6.500-2.500 0-5-1-5-3 0-1 1-1.500 1-3 0-2.500-2.500-5-6-5C8 9 4 12 2 9z" fill="url(#eg2)"/>
  <path d="M11.500 14c-1 3 .5 7.500 4.500 9.500 3.500 1.800 8 .800 10.500-1-3 6-9.500 8.500-15 6.500C5 27 1.500 20.500 3 14c1.500-4 5-6 8.500-5.500 3 .5 5.500 2.500 6 5-2-1.500-5-1.500-6 .5z" fill="#1555a8"/>
  <ellipse cx="17.500" cy="15.500" rx="3.800" ry="3.300" fill="#d6def4"/>
</svg>
<!-- folder -->
<svg style="left:859px;top:887px" width="30" height="28" viewBox="0 0 30 28">
  <path d="M0 3c0-1.500 1-2.500 2.500-2.500h7c1 0 1.800.4 2.300 1.200L13.500 4H27c1.700 0 3 1.300 3 3v18.500c0 1-.8 2-2 2H2c-1.200 0-2-1-2-2z" fill="#f5b73c"/>
  <path d="M0 3c0-1.500 1-2.500 2.500-2.500h7c1 0 1.800.4 2.300 1.200L13.500 4H0z" fill="#e09b2b"/>
  <rect x="0" y="5.500" width="30" height="22" rx="2" fill="#ffcf48"/>
  <path d="M5 22c0-2 1.500-3.500 3.500-3.500h13c2 0 3.500 1.500 3.500 3.500v5.500H5z" fill="#1672d6"/><rect x="9" y="21.500" width="12" height="1.800" rx=".9" fill="#0d4fa0"/>
</svg>
<div class="abs" style="left:870px;top:921px;width:8px;height:4px;border-radius:2px;background:#80848c"></div>
<!-- copilot -->
<svg style="left:914px;top:887px" width="30" height="28" viewBox="0 0 30 28">
  <defs><linearGradient id="cp1" x1="0" y1="0" x2="1" y2="1"><stop offset="0" stop-color="#1b74e6"/><stop offset=".5" stop-color="#3fbf8f"/><stop offset="1" stop-color="#f5b324"/></linearGradient>
  <linearGradient id="cp2" x1="1" y1="0" x2="0" y2="1"><stop offset="0" stop-color="#8a5cf2"/><stop offset=".5" stop-color="#ef5f86"/><stop offset="1" stop-color="#ef6a1f"/></linearGradient></defs>
  <path d="M9.500 1.500h9c1.800 0 3 1 3.500 2.600l.8 3h-7.300c-1.800 0-3 .9-3.600 2.700L9.500 18c-.5 1.700-1.800 2.600-3.500 2.600H4c-2.500 0-3.800-2-3-4.300L5.500 4.500c.6-1.900 2-3 4-3z" fill="url(#cp1)" stroke="url(#cp1)" stroke-width="1.600" stroke-linejoin="round"/>
  <path d="M20.500 26.500h-9c-1.800 0-3-1-3.500-2.600l-.8-3h7.300c1.800 0 3-.9 3.600-2.700L20.500 10c.5-1.700 1.800-2.600 3.500-2.600h2c2.500 0 3.800 2 3 4.300l-4.500 11.800c-.6 1.900-2 3-4 3z" fill="url(#cp2)" stroke="url(#cp2)" stroke-width="1.600" stroke-linejoin="round"/>
</svg>
<!-- squares app -->
<div class="abs" style="left:977px;top:895px;width:22px;height:20px;background:#1d1b22"></div>
<div class="abs" style="left:969px;top:887px;width:22px;height:20px;background:rgba(248,248,250,.82)"></div>
<!-- search pill -->
<div class="abs" style="left:1015px;top:882px;width:273px;height:38px;border-radius:19px;background:rgba(248,249,254,.86);box-shadow:0 1px 1.500px rgba(0,0,40,.18)"></div>
<div class="t" id="srch" dir="rtl" style="left:1200px;top:891px;width:42px;font-family:'DejaVu Sans','Liberation Sans',sans-serif;font-size:15.500px;color:#2a2a2a;text-align:right;line-height:22px;height:22px">بحث</div>
<svg style="left:1255px;top:891px" width="20" height="20" viewBox="0 0 20 20" fill="none" stroke="#1b1b1b" stroke-width="2" stroke-linecap="round"><circle cx="8.300" cy="8.300" r="6.500"/><path d="M13.200 13.200l5.300 5.300"/></svg>
<!-- windows logo -->
<svg style="left:1306px;top:887px" width="29" height="29" viewBox="0 0 29 29">
  <defs><linearGradient id="wl" x1="0" y1="1" x2="1" y2="0"><stop offset="0" stop-color="#0f6fd0"/><stop offset="1" stop-color="#35bcf3"/></linearGradient></defs>
  <rect x="0" y="0" width="14" height="14" rx="1" fill="url(#wl)"/><rect x="15" y="0" width="14" height="14" rx="1" fill="#35b8f1"/><rect x="0" y="15" width="14" height="14" rx="1" fill="#0f70d2"/><rect x="15" y="15" width="14" height="14" rx="1" fill="#1a8fe0"/>
</svg>
<!-- weather widget -->
<div class="t" id="ar1" dir="rtl" style="left:1756px;top:880px;width:100px;text-align:right;direction:rtl;font-family:'DejaVu Sans','Liberation Sans',sans-serif;font-size:14.500px;color:#1b1b1b;line-height:22px;height:22px">الهواء: رديء</div>
<div class="t" id="ar2" dir="rtl" style="left:1756px;top:900px;width:100px;font-family:'DejaVu Sans','Liberation Sans',sans-serif;font-size:14px;color:#3a3a3a;line-height:22px;height:22px">غداً</div>
<svg style="left:1868px;top:885px" width="26" height="30" viewBox="0 0 26 30">
  <path d="M5 5l14-3 3 2v20L5 29z" fill="#c9580f"/>
  <path d="M2 10.500c6-1.500 16-3 23-3.500M2 15.500c6-1.500 16-3 23-3.500M2 20.500c6-1.500 16-3 23-3.500M3 25c6-1.500 14-2.500 20-3" stroke="#f6a53a" stroke-width="1.800" fill="none" stroke-linecap="round"/>
</svg>
<div class="abs" style="left:1861.500px;top:879px;width:20px;height:20px;border-radius:50%;background:#d13a2f"></div>
<div class="t" id="bd3" style="left:1861.500px;top:879px;width:20px;text-align:center;font-size:14px;color:#fff;line-height:20px;height:20px">3</div>
<!-- watermark -->
<div class="abs" id="wm1" dir="rtl" style="left:835px;top:790px;width:250px;height:90px;font-family:'DejaVu Sans','Liberation Sans',sans-serif;font-weight:700;font-size:64px;line-height:90px;color:#b2b2b4;-webkit-text-stroke:3px #b2b2b4;opacity:.37;text-align:center;white-space:nowrap">مستقل</div>
<div class="abs" id="wm2" style="left:845px;top:871px;width:240px;height:40px;font-weight:700;font-size:37px;line-height:40px;color:#b2b2b8;opacity:.33;white-space:nowrap;letter-spacing:.2px">mostaql.com</div>
</body>
</html>
